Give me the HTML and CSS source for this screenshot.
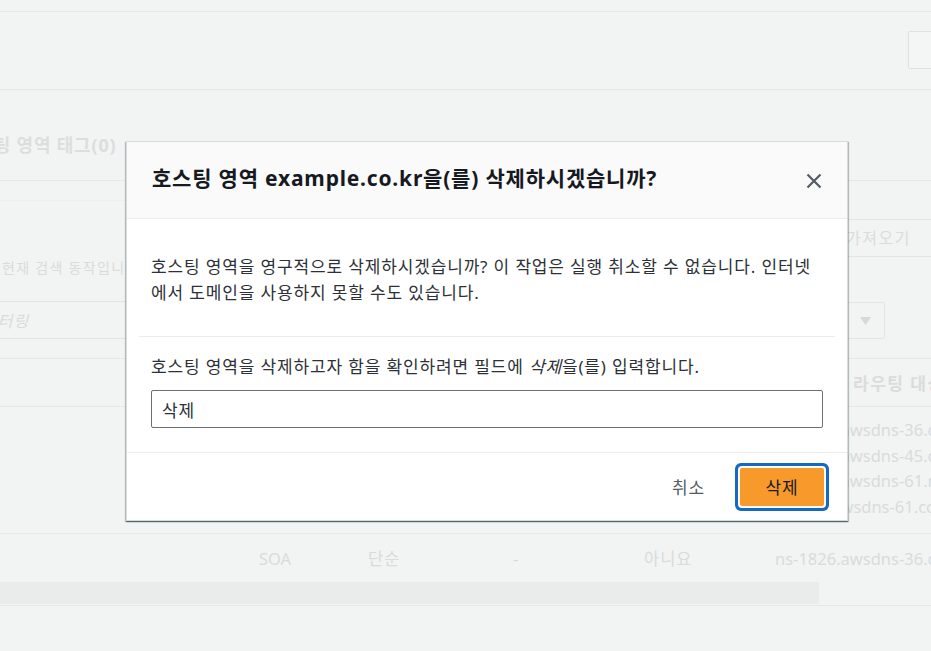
FILE: index.html
```html
<!DOCTYPE html>
<html lang="ko">
<head>
<meta charset="utf-8">
<title>호스팅 영역 삭제</title>
<link rel="stylesheet" href="styles.css">
</head>
<body>
<div class="page" aria-hidden="true">
  <div class="strip"></div>
  <div class="pagehead"><span class="ghost-btn"></span></div>
  <div class="tags"><h2 class="tags-title">호스팅 영역 태그(0)</h2></div>
  <div class="toolbar">
    <div class="tool-left">
      <div class="rule-l"></div>
      <p class="hint">현재 검색 동작입니다</p>
      <div class="filter"><span>필터링</span></div>
    </div>
    <div class="tool-right">
      <div class="import-btn">가져오기</div>
      <div class="select">
        <svg class="caret" width="11" height="8" viewBox="0 0 11 8"><polygon points="0,0 11,0 5.5,8"/></svg>
      </div>
    </div>
  </div>
  <div class="thead"><span class="th-sep"></span><span class="th">라우팅 대상</span></div>
  <div class="ns-row">
    <div class="values">ns-1826.awsdns-36.co.uk.<br>ns-1245.awsdns-45.com.<br>ns-1632.awsdns-61.net.<br>ns-826.awsdns-61.co.uk.</div>
  </div>
  <div class="soa-row">
    <span class="cell c1">SOA</span>
    <span class="cell c2">단순</span>
    <span class="cell c3">-</span>
    <span class="cell c4">아니요</span>
    <span class="cell c5">ns-1826.awsdns-36.co.uk.</span>
  </div>
  <div class="scrollbar"></div>
  <div class="bottom-rule"></div>
</div>

<div class="modal" role="dialog" aria-labelledby="dlg-title">
  <div class="modal-head">
    <h2 id="dlg-title" class="modal-title">호스팅 영역 example.co.kr을(를) 삭제하시겠습니까?</h2>
    <button class="close" aria-label="닫기">
      <svg width="16" height="16" viewBox="0 0 16 16"><path d="M1.5 1.5 L14.5 14.5 M14.5 1.5 L1.5 14.5"/></svg>
    </button>
  </div>
  <div class="modal-body">
    <p class="warn">호스팅 영역을 영구적으로 삭제하시겠습니까? 이 작업은 실행 취소할 수 없습니다. 인터넷에서 도메인을 사용하지 못할 수도 있습니다.</p>
  </div>
  <div class="divider"></div>
  <div class="confirm">
    <label class="confirm-label" for="confirm-input">호스팅 영역을 삭제하고자 함을 확인하려면 필드에 <em>삭제</em>을(를) 입력합니다.</label>
    <input id="confirm-input" class="confirm-input" type="text" value="삭제">
  </div>
  <div class="modal-foot">
    <button class="btn-cancel">취소</button>
    <button class="btn-primary">삭제</button>
  </div>
</div>
</body>
</html>
```

FILE: styles.css
```css
* { box-sizing: border-box; }

html, body {
  margin: 0;
  height: 651px;
  overflow: hidden;
  background: #f2f3f3;
  font-family: "Noto Sans", "Noto Sans CJK KR", sans-serif;
}

/* ---------- faded page behind the dialog ---------- */
.page {
  width: 931px;
  height: 651px;
  overflow: hidden;
  color: #d9dbdb;
  font-size: 16px;
}

.strip {
  height: 12px;
  border-bottom: 1px solid #e8eaea;
}

.pagehead {
  height: 78px;
  padding-top: 19px;
  border-bottom: 1px solid #e6e8e8;
}

.ghost-btn {
  display: block;
  margin-left: 908px;
  width: 60px;
  height: 38px;
  border: 1px solid #dfe2e2;
  border-radius: 2px;
  background: #f4f5f5;
}

.tags {
  height: 91px;
  padding-top: 42px;
  border-bottom: 1px solid #e6e8e8;
}

.tags-title {
  margin: 0 0 0 -41px;
  font-size: 18px;
  font-weight: 700;
  line-height: 26px;
  letter-spacing: 0.8px;
  color: #dcdede;
  white-space: nowrap;
}

.toolbar {
  height: 177px;
  display: flex;
  justify-content: space-between;
}

.tool-left { width: 127px; }

.rule-l {
  height: 20px;
  border-bottom: 1px solid #edefef;
}

.hint {
  margin: 57px 0 0 2px;
  font-size: 14px;
  line-height: 20px;
  white-space: nowrap;
  letter-spacing: 1.3px;
}

.filter {
  margin: 23px 0 0 -33px;
  width: 200px;
  height: 38px;
  border: 1px solid #e3e5e5;
  padding-left: 14px;
  display: flex;
  align-items: center;
  font-style: italic;
  letter-spacing: 1px;
  white-space: nowrap;
}

.tool-right { width: 156px; }

.import-btn {
  margin-top: 38px;
  width: 200px;
  height: 38px;
  border: 1px solid #e3e5e5;
  padding-left: 70px;
  line-height: 36px;
  white-space: nowrap;
  letter-spacing: 1.5px;
  color: #dadcdc;
}

.select {
  margin-top: 45px;
  width: 110px;
  height: 37px;
  border: 1px solid #e3e5e5;
  border-radius: 2px;
  display: flex;
  justify-content: flex-end;
  align-items: center;
  padding-right: 13px;
}

.caret { fill: #d6d9d9; display: block; }

.thead {
  height: 49px;
  border-top: 1px solid #e6e8e8;
  border-bottom: 1px solid #e6e8e8;
  display: flex;
  align-items: center;
  padding-left: 843px;
  white-space: nowrap;
}

.th-sep {
  flex: none;
  width: 0;
  height: 18px;
  border-left: 2px solid #e2e4e4;
  margin-right: 8px;
}

.th {
  flex: none;
  font-size: 17px;
  font-weight: 700;
  letter-spacing: 1.5px;
  color: #dadcdc;
}

.ns-row {
  height: 127px;
  padding: 10px 0 0 775px;
  border-bottom: 1px solid #e9ebeb;
}

.values {
  line-height: 25.5px;
  white-space: nowrap;
  font-size: 16.5px;
}

.soa-row {
  height: 48px;
  display: flex;
  align-items: center;
  padding-left: 259px;
  white-space: nowrap;
  font-size: 16.5px;
}

.cell { flex: none; }
.c1 { width: 109px; }
.c2 { width: 145px; letter-spacing: 1px; }
.c3 { width: 131px; }
.c4 { width: 131px; letter-spacing: 1px; }

.scrollbar {
  width: 819px;
  height: 22px;
  background: #eaebeb;
}

.bottom-rule {
  margin-top: 1px;
  height: 1px;
  background: #e6e8e8;
}

/* ---------- dialog ---------- */
.modal {
  position: absolute;
  left: 126px;
  top: 141px;
  width: 722px;
  background: #fff;
  border: 1px solid #d5dbdb;
  box-shadow: 0 1px 1px 0 rgba(0, 28, 36, 0.45),
              1px 1px 1px 0 rgba(0, 28, 36, 0.2),
              -1px 1px 1px 0 rgba(0, 28, 36, 0.2);
  color: #16191f;
}

.modal-head {
  height: 77px;
  background: #fafafa;
  border-bottom: 1px solid #eaeded;
  display: flex;
  align-items: center;
  justify-content: space-between;
  padding: 0 25px 5px 25px;
}

.modal-title {
  margin: 0;
  font-size: 21px;
  font-weight: 700;
  line-height: 28px;
  letter-spacing: 0.8px;
  color: #16191f;
  white-space: nowrap;
}

.close {
  flex: none;
  width: 16px;
  height: 16px;
  padding: 0;
  margin-top: 7px;
  border: 0;
  background: none;
  cursor: pointer;
}

.close svg {
  display: block;
  stroke: #545b64;
  stroke-width: 2.2;
  fill: none;
}

.modal-body {
  padding: 35px 24px 30px;
}

.warn {
  margin: 0;
  font-size: 17px;
  line-height: 26px;
  letter-spacing: 0.85px;
  color: #2d3137;
}

.divider {
  height: 1px;
  margin: 0 12px;
  background: #eaeded;
}

.confirm {
  padding: 17px 24px 24px;
}

.confirm-label {
  display: block;
  margin-bottom: 10px;
  font-size: 17px;
  line-height: 26px;
  letter-spacing: 0.85px;
  color: #2d3137;
}

.confirm-label em { font-style: italic; }

.confirm-input {
  display: block;
  width: 100%;
  height: 38px;
  margin: 0;
  border: 1px solid #687078;
  border-radius: 2px;
  padding: 0 10px;
  background: #fff;
  font-family: inherit;
  font-size: 17px;
  letter-spacing: 0.85px;
  color: #2d3137;
  outline: none;
}

.modal-foot {
  height: 68px;
  border-top: 1px solid #eaeded;
  display: flex;
  justify-content: flex-end;
  align-items: center;
  padding: 0 23px;
}

.btn-cancel {
  padding: 0 20px;
  margin-right: 15px;
  border: 0;
  background: none;
  font-family: inherit;
  font-size: 17px;
  letter-spacing: 0.85px;
  color: #545b64;
  cursor: pointer;
}

.btn-primary {
  width: 84px;
  height: 38px;
  border: 0;
  border-radius: 2px;
  background: #f8992b;
  box-shadow: 0 0 0 2px #fff, 0 0 0 5px #1769bf;
  font-family: inherit;
  font-size: 17px;
  letter-spacing: 0.85px;
  color: #16191f;
  cursor: pointer;
}
```
